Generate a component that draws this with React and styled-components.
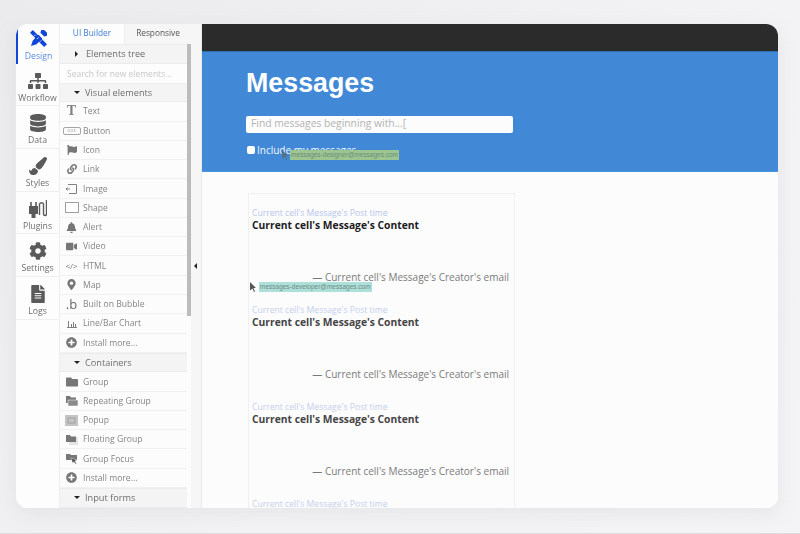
import React from "react";
import styled, { createGlobalStyle } from "styled-components";
import {
  FaSitemap, FaDatabase, FaPaintBrush, FaCog, FaFileAlt, FaFlag, FaLink, FaBell,
  FaVideo, FaMapMarkerAlt, FaPlusCircle, FaFolder,
} from "react-icons/fa";

const Global = createGlobalStyle`
  html, body { margin: 0; padding: 0; height: 100%; }
  body {
    width: 800px; height: 534px; overflow: hidden;
    background: linear-gradient(135deg, #ebebed 0%, #f3f3f5 60%, #f4f4f6 100%);
    font-family: "Open Sans", sans-serif;
  }
  * { box-sizing: border-box; }
`;

const Page = styled.div`
  width: 800px; height: 534px; padding: 24px 22px 26px 16px;
  border-bottom: 1px solid #dcdcde;
`;
const Frame = styled.div`
  width: 762px; height: 484px; display: flex; overflow: hidden;
  border-radius: 12px; background: #fcfcfd; filter: blur(0.6px);
  box-shadow: 0 6px 18px rgba(190, 190, 200, 0.25);
`;
const Rail = styled.nav`
  width: 43px; flex: none; display: flex; flex-direction: column; background: #fdfdfd;
`;
const RailItem = styled.div`
  height: ${p => p.$h}px; flex: none; display: flex; flex-direction: column; align-items: center;
  padding-top: ${p => (p.$active ? 4 : 6)}px; gap: 1px; font-size: 8.7px; line-height: 12px;
  color: ${p => (p.$active ? "#5a8fd8" : "#6e6e6e")};
  border-left: ${p => (p.$active ? "2px solid #1246d8" : "none")};
  border-bottom: ${p => (p.$active ? "none" : "1px solid #efefef")};
  svg { display: block; width: ${p => p.$icon}px; height: ${p => p.$icon}px; color: #5a5a5a; }
`;
const IconSlot = styled.div`
  height: 21px; display: flex; align-items: center; justify-content: center;
`;
const Panel = styled.aside`
  width: 132px; flex: none; display: flex; flex-direction: column; position: relative;
  background: #fcfcfc; border-left: 1px solid #eeeeee; overflow: hidden;
`;
const Tabs = styled.div`
  height: 20px; flex: none; display: flex; font-size: 8.3px; line-height: 17px; text-align: center;
`;
const Tab = styled.div`
  flex: ${p => (p.$active ? "0 0 64px" : "1")};
  color: ${p => (p.$active ? "#3f7fd3" : "#555")};
  background: ${p => (p.$active ? "#fdfdfd" : "#f6f6f6")};
  border-left: ${p => (p.$active ? "none" : "1px solid #eee")};
`;
const Scrollbar = styled.div`
  position: absolute; right: 0; top: 20px; width: 4px; height: 272px; background: #bcbcbc;
`;
const Section = styled.div`
  height: ${p => p.$h || 19.35}px; flex: none; display: flex; align-items: center; gap: 7px;
  padding: 0 0 1px 14px; margin-right: 4px; font-size: 9.2px; color: #6e6e6e;
  background: #f4f4f4; border-top: 1px solid #ececec; border-bottom: 1px solid #ececec;
`;
const Caret = styled.span`
  width: 0; height: 0; flex: none; margin-right: ${p => (p.$open ? -2 : 1)}px;
  ${p => p.$open
    ? "border-left: 3px solid transparent; border-right: 3px solid transparent; border-top: 3px solid #222;"
    : "border-top: 3px solid transparent; border-bottom: 3px solid transparent; border-left: 3px solid #222; margin-left: 1px;"}
`;
const Search = styled.div`
  height: 19px; flex: none; display: flex; align-items: center; padding-left: 7px;
  font-size: 8.5px; color: #c8c8c8; background: #fdfdfd; margin-right: 4px;
`;
const Row = styled.div`
  height: 19.27px; flex: none; display: flex; align-items: center; margin-right: 4px;
  font-size: 8.6px; color: #858585; border-bottom: 1px solid #f1f1f1;
  svg { display: block; }
`;
const RowIcon = styled.span`
  width: 23px; flex: none; display: flex; justify-content: center; align-items: center;
  color: #767676; font-size: 11px;
`;
const SerifT = styled.span`
  font: bold 14px "Liberation Serif", serif; color: #808080;
`;
const ClickBtn = styled.span`
  width: 18px; height: 8px; border: 1px solid #a5a5a5; border-radius: 2px; font-size: 3px;
  line-height: 6px; text-align: center; color: #888;
`;
const Code = styled.span`
  font-size: 8px; color: #777;
`;
const BubbleB = styled.span`
  font-size: 13px; line-height: 13px; color: #666;
`;
const Divider = styled.div`
  width: 11px; flex: none; display: flex; align-items: center; justify-content: center;
  background: #f6f6f6; border-right: 1px solid #e8e8e8; padding-right: 1px;
`;
const Handle = styled.span`
  width: 0; height: 0; border-top: 3px solid transparent; border-bottom: 3px solid transparent;
  border-right: 3px solid #222;
`;
const Canvas = styled.main`
  flex: 1; display: flex; flex-direction: column; position: relative; overflow: hidden; background: #fcfcfd;
`;
const TopBar = styled.div`
  height: 28px; flex: none; background: #2b2b2b; border-bottom: 1px solid #2c6ea8;
`;
const Hero = styled.header`
  height: 120px; flex: none; background: #4189d6; padding: 14px 0 0 44px;
  border-bottom: 1px solid #4a97dc; display: flex; flex-direction: column; align-items: flex-start;
`;
const Title = styled.h1`
  margin: 0; font: bold 26.8px/34px "Liberation Sans", sans-serif; color: #fff;
`;
const Field = styled.div`
  width: 267px; height: 17px; margin-top: 16px; padding-left: 5px; background: #fcfcfd;
  border-radius: 2px; font-size: 10.3px; line-height: 14px; color: #b3b3b3;
`;
const Check = styled.label`
  display: flex; align-items: center; gap: 2px; margin: 9px 0 0 1px; font-size: 10px; line-height: 16px; color: #f4f8fd;
`;
const Box = styled.span`
  width: 8px; height: 8px; background: #fff; border-radius: 2px;
`;
const DragTag = styled.div`
  position: absolute; left: ${p => p.$x}px; top: ${p => p.$y}px; height: 10px; padding: 0 1px;
  display: flex; align-items: center; font: 6.5px/10px "Liberation Sans", sans-serif; color: #6d8c80;
  background: ${p => p.$bg};
`;
const Pointer = styled.svg`
  position: absolute; left: ${p => p.$x}px; top: ${p => p.$y}px; width: 7px; height: 10px;
`;
const List = styled.section`
  width: 267px; margin: 21px 0 0 46px; padding: 0 5px 0 4px; flex: 1;
  border: 1px solid #f0f0f1; border-bottom: none; background: #fcfcfd;
`;
const Cell = styled.article`
  height: 97px; flex: none; display: flex; flex-direction: column; padding-top: 13px;
`;
const PostTime = styled.div`
  margin-left: -1px; font-size: 8.6px; line-height: 12px; color: #b7c5ea; opacity: ${p => p.$o};
`;
const Content = styled.div`
  margin: -1px 0 0 -1px; font-size: 10.3px; line-height: 14px; font-weight: 700; color: ${p => p.$c};
`;
const Credit = styled.div`
  margin-top: 38px; text-align: right; font-size: 10px; line-height: 14px; color: #7a7a7a;
`;

const Design = () => (
  <svg viewBox="0 0 18 18">
    <path d="M0 3l3-3 15 15-3 3z" fill="#1246d8" />
    <path d="M12 0l-1 3 4 4 3-1 0-3-3-3zM3 11L1 17l6-2 6-6-4-4z" fill="#1246d8" />
    <path d="M4.500 6.500l1.500-1.500M7.500 9.500l1.500-1.500M10.500 12.500l1.500-1.500" stroke="#fff" strokeWidth=".9" />
  </svg>
);
const Plug = () => (
  <svg viewBox="0 0 18 18" fill="none">
    <path d="M0 6h9v8H6.500v4h-4v-4H0z" fill="#5a5a5a" />
    <path d="M2 6V2M7 6V2" stroke="#5a5a5a" strokeWidth="1.600" />
    <path d="M10.500 15V4a2.200 2.200 0 0 1 4 0v10a1.500 1.500 0 0 0 3 0V0" stroke="#5a5a5a" strokeWidth="1.400" />
  </svg>
);
const ImageIco = () => (
  <svg width="13" height="12" viewBox="0 0 13 12" fill="none" stroke="#808080">
    <path d="M3 1.500h8.500v9H4M5 6H1M2.500 4.500L1 6l1.500 1.500" />
  </svg>
);
const ShapeIco = () => (
  <svg width="14" height="11" viewBox="0 0 14 11" fill="#fff" stroke="#a0a0a0"><rect x=".5" y=".5" width="13" height="10" /></svg>
);
const ChartIco = () => (
  <svg width="10" height="9" viewBox="0 0 10 9" fill="#808080"><path d="M1 2h1v6H1zM4 5h1v3H4zM6 3h1v5H6zM8 5h1v3H8zM0 8h10v1H0z" /></svg>
);
const PopupIco = () => (
  <svg width="13" height="11" viewBox="0 0 13 11"><rect width="13" height="11" fill="#c4c4c4" /><rect x="3" y="3" width="7" height="5" fill="none" stroke="#a0a0a0" /></svg>
);
const StackFolder = ({ light }) => (
  <svg width="12" height="11" viewBox="0 0 12 11">
    {light && <rect x="3" y="3" width="9" height="8" fill="#e4e4e4" />}
    <path d="M0 1h4l1 1.500h5V8H0z" fill="#777" />
    {!light && <path d="M2 5h10v6H2z" fill="#8a8a8a" stroke="#fff" strokeWidth=".5" />}
  </svg>
);
const FocusIco = () => (
  <svg width="12" height="11" viewBox="0 0 12 11"><path d="M0 1h4l1 1h6v5H0z" fill="#777" /><path d="M5 5l6 2-2 1 1.500 2.500-1 .5L8 9 6.500 10z" fill="#555" stroke="#fff" strokeWidth=".4" /></svg>
);

const railItems = [
  { label: "Design", h: 40, active: true, size: 17, icon: <Design /> },
  { label: "Workflow", h: 42, size: 20, icon: <FaSitemap /> },
  { label: "Data", h: 43, size: 18, icon: <FaDatabase /> },
  { label: "Styles", h: 43, size: 18, icon: <FaPaintBrush /> },
  { label: "Plugins", h: 42, size: 18, icon: <Plug /> },
  { label: "Settings", h: 43, size: 18, icon: <FaCog /> },
  { label: "Logs", h: 43, size: 18, icon: <FaFileAlt /> },
];
const visual = [
  ["Text", <SerifT>T</SerifT>],
  ["Button", <ClickBtn>CLICK</ClickBtn>],
  ["Icon", <FaFlag size={10} />],
  ["Link", <FaLink size={10} />],
  ["Image", <ImageIco />],
  ["Shape", <ShapeIco />],
  ["Alert", <FaBell size={11} />],
  ["Video", <FaVideo size={11} />],
  ["HTML", <Code>&lt;/&gt;</Code>],
  ["Map", <FaMapMarkerAlt size={11} />],
  ["Built on Bubble", <BubbleB>.b</BubbleB>],
  ["Line/Bar Chart", <ChartIco />],
  ["Install more...", <FaPlusCircle size={11} />],
];
const containers = [
  ["Group", <FaFolder size={12} />],
  ["Repeating Group", <StackFolder />],
  ["Popup", <PopupIco />],
  ["Floating Group", <StackFolder light />],
  ["Group Focus", <FocusIco />],
  ["Install more...", <FaPlusCircle size={11} />],
];
const cells = [
  { o: 1, c: "#1d1d1d" },
  { o: 0.8, c: "#444" },
  { o: 0.8, c: "#444" },
  { o: 0.8, c: "#444" },
];

const Rows = ({ items }) => items.map(([label, icon], i) => (
  <Row key={i}><RowIcon>{icon}</RowIcon>{label}</Row>
));

export default function App() {
  return (
    <Page>
      <Global />
      <Frame>
        <Rail>
          {railItems.map(r => (
            <RailItem key={r.label} $h={r.h} $active={r.active} $icon={r.size}>
              <IconSlot>{r.icon}</IconSlot>{r.label}
            </RailItem>
          ))}
        </Rail>
        <Panel>
          <Tabs><Tab $active>UI Builder</Tab><Tab>Responsive</Tab></Tabs>
          <Section $h={20}><Caret />Elements tree</Section>
          <Search>Search for new elements...</Search>
          <Section><Caret $open />Visual elements</Section>
          <Rows items={visual} />
          <Section $h={19.6}><Caret $open />Containers</Section>
          <Rows items={containers} />
          <Section $h={20}><Caret $open />Input forms</Section>
          <Scrollbar />
        </Panel>
        <Divider><Handle /></Divider>
        <Canvas>
          <TopBar />
          <Hero>
            <Title>Messages</Title>
            <Field>Find messages beginning with...[</Field>
            <Check><Box />Include my messages</Check>
          </Hero>
          <List>
            {cells.map((c, i) => (
              <Cell key={i}>
                <PostTime $o={c.o}>Current cell's Message's Post time</PostTime>
                <Content $c={c.c}>Current cell's Message's Content</Content>
                <Credit>— Current cell's Message's Creator's email</Credit>
              </Cell>
            ))}
          </List>
          <Pointer $x={80} $y={126} viewBox="0 0 7 10"><path d="M0 0l6 6H3.500L5 9.500 4 10 2.500 6.500 0 8.500z" fill="#56707f" /></Pointer>
          <DragTag $x={88} $y={126} $bg="#9cc58f">messages-designer@messages.com</DragTag>
          <Pointer $x={48} $y={258} viewBox="0 0 7 10"><path d="M0 0l6 6H3.500L5 9.500 4 10 2.500 6.500 0 8.500z" fill="#555" /></Pointer>
          <DragTag $x={57} $y={258} $bg="#addfdb">messages-developer@messages.com</DragTag>
        </Canvas>
      </Frame>
    </Page>
  );
}
